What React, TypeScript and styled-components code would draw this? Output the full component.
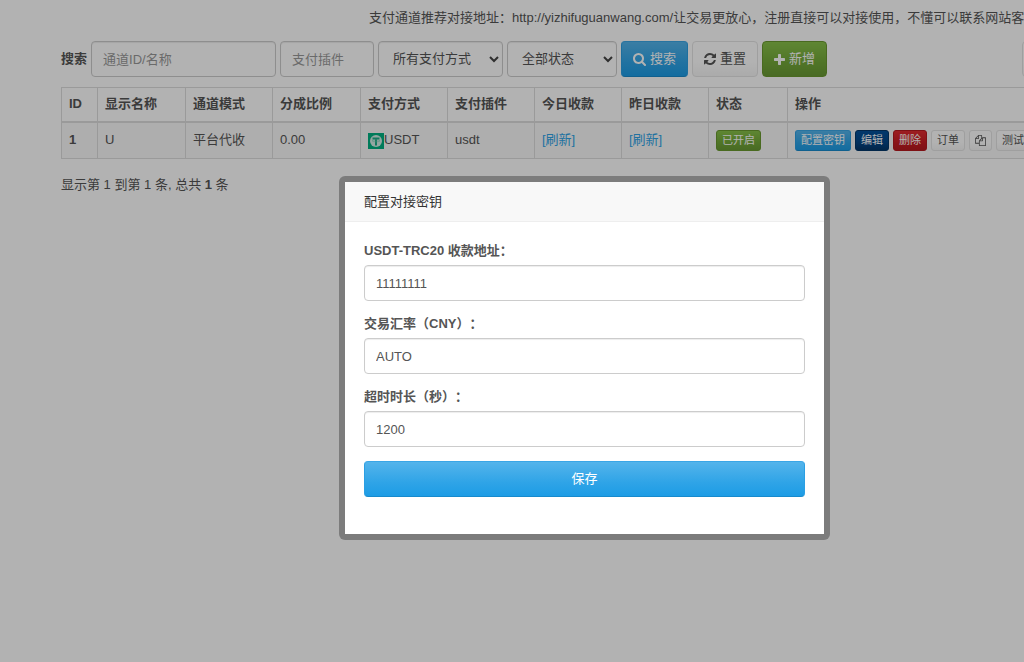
import React from 'react';
import styled, { createGlobalStyle, css } from 'styled-components';

const GlobalStyle = createGlobalStyle`
  *, *::before, *::after { box-sizing: border-box; }
  html { scrollbar-width: none; background: #fff; }
  body {
    margin: 0;
    color: #555;
    background: #fff;
    font-family: "Liberation Sans", Arial, "Noto Sans CJK SC", sans-serif;
    font-size: 13px;
    line-height: 18px;
    text-spacing-trim: space-all;
  }
  button, input, select { font: inherit; color: inherit; }
`;

type Tone = 'primary' | 'success' | 'info' | 'danger' | 'plain';

const tones: Record<Tone, ReturnType<typeof css>> = {
  primary: css`
    color: #fff;
    border-color: #3aa6e6 #2b9fe3 #178acc;
    background: linear-gradient(#54b4eb, #2fa4e7 60%, #1d9ce5);
  `,
  success: css`
    color: #fff;
    border-color: #69992f;
    background: linear-gradient(#88c149, #73a839 60%, #699934);
  `,
  info: css`
    color: #fff;
    border-color: #033769;
    background: linear-gradient(#04519b, #044687 60%, #033769);
  `,
  danger: css`
    color: #fff;
    border-color: #b5191f;
    background: linear-gradient(#e12b31, #c71c22 60%, #b5191f);
  `,
  plain: css`
    color: #555;
    border-color: #e4e4e4;
    background: linear-gradient(#fff, #fff 60%, #f5f5f5);
  `,
};

const Page = styled.div`
  position: relative;
  min-width: 1169px;
  min-height: 100vh;
`;

const Main = styled.main`
  padding: 9px 61px 0;
`;

const Notice = styled.p`
  margin: 0 0 14px;
  padding-left: 308px;
  white-space: nowrap;
`;

const Toolbar = styled.form`
  display: flex;
  align-items: center;
  gap: 4px;
  margin-bottom: 10px;
`;

const ToolbarLabel = styled.label`
  font-weight: 700;
`;

const ToolGroup = styled.div`
  display: flex;
  margin-left: auto;
`;

const field = css`
  height: 36px;
  padding: 0 11px;
  border: 1px solid #ccc;
  border-radius: 4px;
  background: #fff;
  box-shadow: inset 0 1px 1px rgba(0, 0, 0, 0.075);
  outline: none;
  &::placeholder { color: #999; opacity: 1; }
`;

const TextField = styled.input<{ $width?: string }>`
  ${field}
  width: ${(p) => p.$width ?? '100%'};
`;

const SelectWrap = styled.span<{ $width: string }>`
  display: grid;
  align-items: center;
  width: ${(p) => p.$width};
  > * { grid-area: 1 / 1; }
  > svg { justify-self: end; margin-right: 4px; pointer-events: none; }
`;

const SelectField = styled.select`
  ${field}
  width: 100%;
  padding: 0 14px;
  appearance: none;
`;

const Button = styled.button<{ $tone: Tone; $block?: boolean }>`
  display: inline-flex;
  align-items: center;
  justify-content: center;
  gap: 4px;
  height: 36px;
  padding: 0 11px;
  width: ${(p) => (p.$block ? '100%' : 'auto')};
  border: 1px solid;
  border-radius: 4px;
  white-space: nowrap;
  cursor: pointer;
  ${(p) => tones[p.$tone]}
`;

const SmallButton = styled(Button)`
  height: 21px;
  padding: 0 5px;
  border-radius: 3px;
  font-size: 11px;
  line-height: 16px;
`;

const Table = styled.table`
  width: 100%;
  table-layout: fixed;
  border-collapse: collapse;
  th, td {
    height: 37px;
    padding: 0 7px;
    border: 1px solid #ddd;
    text-align: left;
    white-space: nowrap;
  }
  thead th { height: 34px; border-bottom-width: 2px; }
  tbody tr { background: #f9f9f9; }
`;

const Col = styled.col<{ $width?: string }>`
  width: ${(p) => p.$width ?? 'auto'};
`;

const Inline = styled.span<{ $gap?: string; $align?: string }>`
  display: flex;
  align-items: ${(p) => p.$align ?? 'center'};
  gap: ${(p) => p.$gap ?? '0'};
`;

const Link = styled.a`
  color: #2fa4e7;
  text-decoration: none;
`;

const Summary = styled.p`
  margin: 17px 0 0;
`;

const Overlay = styled.div`
  position: absolute;
  inset: 0;
  display: flex;
  justify-content: center;
  align-items: flex-start;
  padding-top: 176px;
  background: rgba(0, 0, 0, 0.3);
`;

const Dialog = styled.section`
  width: 491px;
  border: 6px solid rgba(0, 0, 0, 0.3);
  border-radius: 6px;
  background: #fff;
  background-clip: padding-box;
`;

const DialogTitle = styled.h2`
  margin: 0;
  padding: 11px 19px 10px;
  border-bottom: 1px solid #eee;
  background: #f8f8f8;
  color: #333;
  font-size: 13px;
  font-weight: 400;
  line-height: 18px;
`;

const DialogForm = styled.form`
  display: grid;
  gap: 14px;
  padding: 20px 19px 37px;
`;

const FormGroup = styled.div`
  display: grid;
  gap: 5px;
`;

const FormLabel = styled.label`
  font-weight: 700;
`;

type Icon = { d: string; box: string };

const Glyph = ({ icon, size }: { icon: Icon; size: number }) => (
  <svg width={size} height={size} viewBox={icon.box} fill="currentColor" aria-hidden="true">
    <path d={icon.d} />
  </svg>
);

const searchIcon: Icon = {
  box: '64 128 1664 1664',
  d: 'M1216 832q0-185-131.5-316.5t-316.5-131.5-316.5 131.5-131.5 316.5 131.5 316.5 316.5 131.5 316.5-131.5 131.5-316.5zm512 832q0 52-38 90t-90 38q-54 0-90-38l-343-342q-179 124-399 124-143 0-273.5-55.5t-225-150-150-225-55.5-273.5 55.5-273.5 150-225 225-150 273.5-55.5 273.5 55.5 225 150 150 225 55.5 273.5q0 220-124 399l343 343q37 37 37 90z',
};
const refreshIcon: Icon = {
  box: '128 128 1536 1536',
  d: 'M1639 1056q0 5-1 7-64 268-268 434.5t-478 166.5q-146 0-282.5-55t-243.5-157l-129 129q-19 19-45 19t-45-19-19-45v-448q0-26 19-45t45-19h448q26 0 45 19t19 45-19 45l-137 137q71 66 161 102t187 36q134 0 250-65t186-179q11-17 53-117 8-23 30-23h192q13 0 22.5 9.5t9.5 22.5zm25-800v448q0 26-19 45t-45 19h-448q-26 0-45-19t-19-45 19-45l138-138q-148-137-349-137-134 0-250 65t-186 179q-11 17-53 117-8 23-30 23h-199q-13 0-22.5-9.5t-9.5-22.5v-7q65-268 270-434.5t480-166.5q146 0 284 55.5t245 156.5l130-129q19-19 45-19t45 19 19 45z',
};
const plusIcon: Icon = {
  box: '192 128 1408 1408',
  d: 'M1600 736v192q0 40-28 68t-68 28h-416v416q0 40-28 68t-68 28h-192q-40 0-68-28t-28-68v-416h-416q-40 0-68-28t-28-68v-192q0-40 28-68t68-28h416v-416q0-40 28-68t68-28h192q40 0 68 28t28 68v416h416q40 0 68 28t28 68z',
};
const copyIcon: Icon = {
  box: '0 0 1792 1792',
  d: 'M1696 384q40 0 68 28t28 68v1216q0 40-28 68t-68 28h-960q-40 0-68-28t-28-68v-288h-544q-40 0-68-28t-28-68v-672q0-40 20-88t48-76l408-408q28-28 76-48t88-20h416q40 0 68 28t28 68v328q68-40 128-40h416zm-544 213l-299 299h299v-299zm-640-384l-299 299h299v-299zm196 647l316-316v-416h-384v416q0 40-28 68t-68 28h-416v640h512v-256q0-40 20-88t48-76zm956 804v-1152h-384v416q0 40-28 68t-68 28h-416v640h896z',
};
const listIcon: Icon = {
  box: '0 0 1792 1792',
  d: 'M256 384h1280v192h-1280zM256 800h1280v192h-1280zM256 1216h1280v192h-1280z',
};

const Chevron = () => (
  <svg width="10" height="7" viewBox="0 0 10 7" fill="none" stroke="#444" strokeWidth="2" aria-hidden="true">
    <path d="M1 1l4 4 4-4" />
  </svg>
);

const TetherIcon = () => (
  <svg width="16" height="16" viewBox="0 0 16 16" aria-hidden="true">
    <rect width="16" height="16" fill="#00b082" />
    <circle cx="8" cy="8" r="6" fill="#d5efe8" />
    <path d="M4.500 4.500h7v2h-2.500v6h-2v-6h-2.500z" fill="#1fae88" />
    <ellipse cx="8" cy="7.800" rx="4" ry="1" fill="none" stroke="#6fcbb2" strokeWidth=".5" />
  </svg>
);

const columns: { title: string; width?: string }[] = [
  { title: 'ID', width: '36px' },
  { title: '显示名称', width: '88px' },
  { title: '通道模式', width: '87px' },
  { title: '分成比例', width: '88px' },
  { title: '支付方式', width: '87px' },
  { title: '支付插件', width: '87px' },
  { title: '今日收款', width: '87px' },
  { title: '昨日收款', width: '87px' },
  { title: '状态', width: '79px' },
  { title: '操作' },
];

const settings = [
  { id: 'address', label: 'USDT-TRC20 收款地址：', value: '11111111' },
  { id: 'rate', label: '交易汇率（CNY）：', value: 'AUTO' },
  { id: 'timeout', label: '超时时长（秒）：', value: '1200' },
];

export default function App() {
  return (
    <Page>
      <GlobalStyle />
      <Main>
        <Notice>
          支付通道推荐对接地址：http://yizhifuguanwang.com/让交易更放心，注册直接可以对接使用，不懂可以联系网站客服
        </Notice>
        <Toolbar onSubmit={(e) => e.preventDefault()}>
          <ToolbarLabel htmlFor="keyword">搜索</ToolbarLabel>
          <TextField id="keyword" $width="185px" placeholder="通道ID/名称" />
          <TextField aria-label="支付插件" $width="94px" placeholder="支付插件" />
          <SelectWrap $width="125px">
            <SelectField aria-label="支付方式">
              <option>所有支付方式</option>
            </SelectField>
            <Chevron />
          </SelectWrap>
          <SelectWrap $width="110px">
            <SelectField aria-label="状态">
              <option>全部状态</option>
            </SelectField>
            <Chevron />
          </SelectWrap>
          <Button type="submit" $tone="primary">
            <Glyph icon={searchIcon} size={13} />
            搜索
          </Button>
          <Button type="reset" $tone="plain">
            <Glyph icon={refreshIcon} size={12} />
            重置
          </Button>
          <Button type="button" $tone="success">
            <Glyph icon={plusIcon} size={11} />
            新增
          </Button>
          <ToolGroup>
            <Button type="button" $tone="plain" aria-label="刷新">
              <Glyph icon={refreshIcon} size={19} />
            </Button>
            <Button type="button" $tone="plain" aria-label="列">
              <Glyph icon={listIcon} size={19} />
            </Button>
          </ToolGroup>
        </Toolbar>
        <Table>
          <colgroup>
            {columns.map((c) => (
              <Col key={c.title} $width={c.width} />
            ))}
          </colgroup>
          <thead>
            <tr>
              {columns.map((c) => (
                <th key={c.title} scope="col">
                  {c.title}
                </th>
              ))}
            </tr>
          </thead>
          <tbody>
            <tr>
              <th scope="row">1</th>
              <td>U</td>
              <td>平台代收</td>
              <td>0.00</td>
              <td>
                <Inline $align="flex-end">
                  <TetherIcon />
                  USDT
                </Inline>
              </td>
              <td>usdt</td>
              <td>
                <Link href="#today">[刷新]</Link>
              </td>
              <td>
                <Link href="#yesterday">[刷新]</Link>
              </td>
              <td>
                <Inline>
                  <SmallButton type="button" $tone="success">已开启</SmallButton>
                </Inline>
              </td>
              <td>
                <Inline $gap="4px">
                  <SmallButton type="button" $tone="primary">配置密钥</SmallButton>
                  <SmallButton type="button" $tone="info">编辑</SmallButton>
                  <SmallButton type="button" $tone="danger">删除</SmallButton>
                  <SmallButton type="button" $tone="plain">订单</SmallButton>
                  <SmallButton type="button" $tone="plain" aria-label="复制">
                    <Glyph icon={copyIcon} size={11} />
                  </SmallButton>
                  <SmallButton type="button" $tone="plain">测试</SmallButton>
                </Inline>
              </td>
            </tr>
          </tbody>
        </Table>
        <Summary>
          显示第 1 到第 1 条, 总共 <strong>1</strong> 条
        </Summary>
      </Main>
      <Overlay>
        <Dialog role="dialog" aria-modal="true" aria-labelledby="dialog-title">
          <DialogTitle id="dialog-title">配置对接密钥</DialogTitle>
          <DialogForm onSubmit={(e) => e.preventDefault()}>
            {settings.map((s) => (
              <FormGroup key={s.id}>
                <FormLabel htmlFor={s.id}>{s.label}</FormLabel>
                <TextField id={s.id} defaultValue={s.value} />
              </FormGroup>
            ))}
            <Button type="submit" $tone="primary" $block>
              保存
            </Button>
          </DialogForm>
        </Dialog>
      </Overlay>
    </Page>
  );
}
